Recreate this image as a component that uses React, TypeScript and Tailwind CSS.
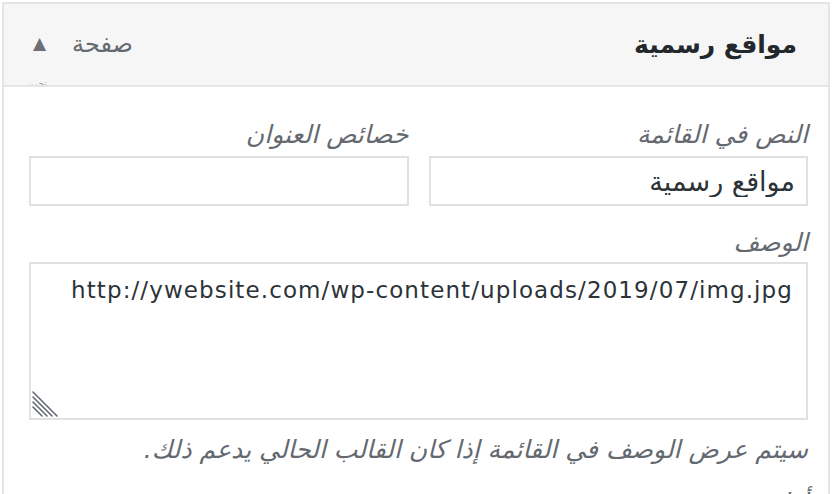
export default function App() {
  return (
    <div
      dir="rtl"
      className="h-[494px] overflow-hidden bg-white pt-[2px] px-[2px]"
      style={{ fontFamily: '"DejaVu Sans", sans-serif' }}
    >
      <div className="border-2 border-[#e4e5e7] h-[600px]">
        {/* header */}
        <div className="relative flex h-[83px] items-center justify-between overflow-hidden border-b-2 border-[#e4e5e7] bg-[#f6f6f6] pr-[31px] pl-[29px]">
          <h3 className="text-[25px] font-bold text-[#23282d] leading-none">مواقع رسمية</h3>
          <div className="flex items-center gap-[26px] pb-[2px]">
            <span className="text-[24px] text-[#646970] leading-none">صفحة</span>
            <span className="text-[17px] text-[#6c7075] leading-none">▲</span>
          </div>
          <span className="absolute left-[22px] bottom-[-6px] text-[9px] text-[#9aa0a6]">تحرير</span>
        </div>

        {/* body */}
        <div className="pr-[20px] pl-[25px] pt-[34px]">
          <div className="grid grid-cols-2 gap-[20px]">
            <label className="flex flex-col">
              <span className="text-[25px] italic text-[#646970] leading-[28px]">النص في القائمة</span>
              <input
                type="text"
                defaultValue="مواقع رسمية"
                className="mt-[7px] h-[50px] border-2 border-[#e1e1e1] bg-white px-[11px] text-[27px] text-[#2c3338] outline-none"
              />
            </label>
            <label className="flex flex-col">
              <span className="text-[25px] italic text-[#646970] leading-[28px]">خصائص العنوان</span>
              <input
                type="text"
                defaultValue=""
                className="mt-[7px] h-[50px] border-2 border-[#e1e1e1] bg-white px-[11px] text-[27px] text-[#2c3338] outline-none"
              />
            </label>
          </div>

          <label className="mt-[23px] flex flex-col">
            <span className="text-[25px] italic text-[#646970] leading-[28px]">الوصف</span>
            <div className="relative mt-[5px]">
              <textarea
                defaultValue="http://ywebsite.com/wp-content/uploads/2019/07/img.jpg"
                className="block w-full h-[158px] resize-none border-2 border-[#e1e1e1] bg-white px-[13px] py-[10px] text-[23px] tracking-[1.1px] leading-[32px] text-[#2c3338] outline-none"
              />
              <svg
                className="pointer-events-none absolute left-[3px] bottom-[3px]"
                width="26"
                height="26"
                viewBox="0 0 26 26"
              >
                <g stroke="#646970" strokeWidth="1.6" strokeLinecap="round">
                  <line x1="1" y1="1" x2="25" y2="25" />
                  <line x1="1" y1="6" x2="20" y2="25" />
                  <line x1="1" y1="11" x2="15" y2="25" />
                  <line x1="1" y1="16" x2="10" y2="25" />
                </g>
              </svg>
            </div>
          </label>
          <p className="mt-[13px] text-[25px] italic text-[#646970] leading-[34px]">
            سيتم عرض الوصف في القائمة إذا كان القالب الحالي يدعم ذلك.
          </p>
          <p className="mt-[22px] text-[25px] italic text-[#646970] leading-[28px]">أظهر</p>
        </div>
      </div>
    </div>
  );
}
